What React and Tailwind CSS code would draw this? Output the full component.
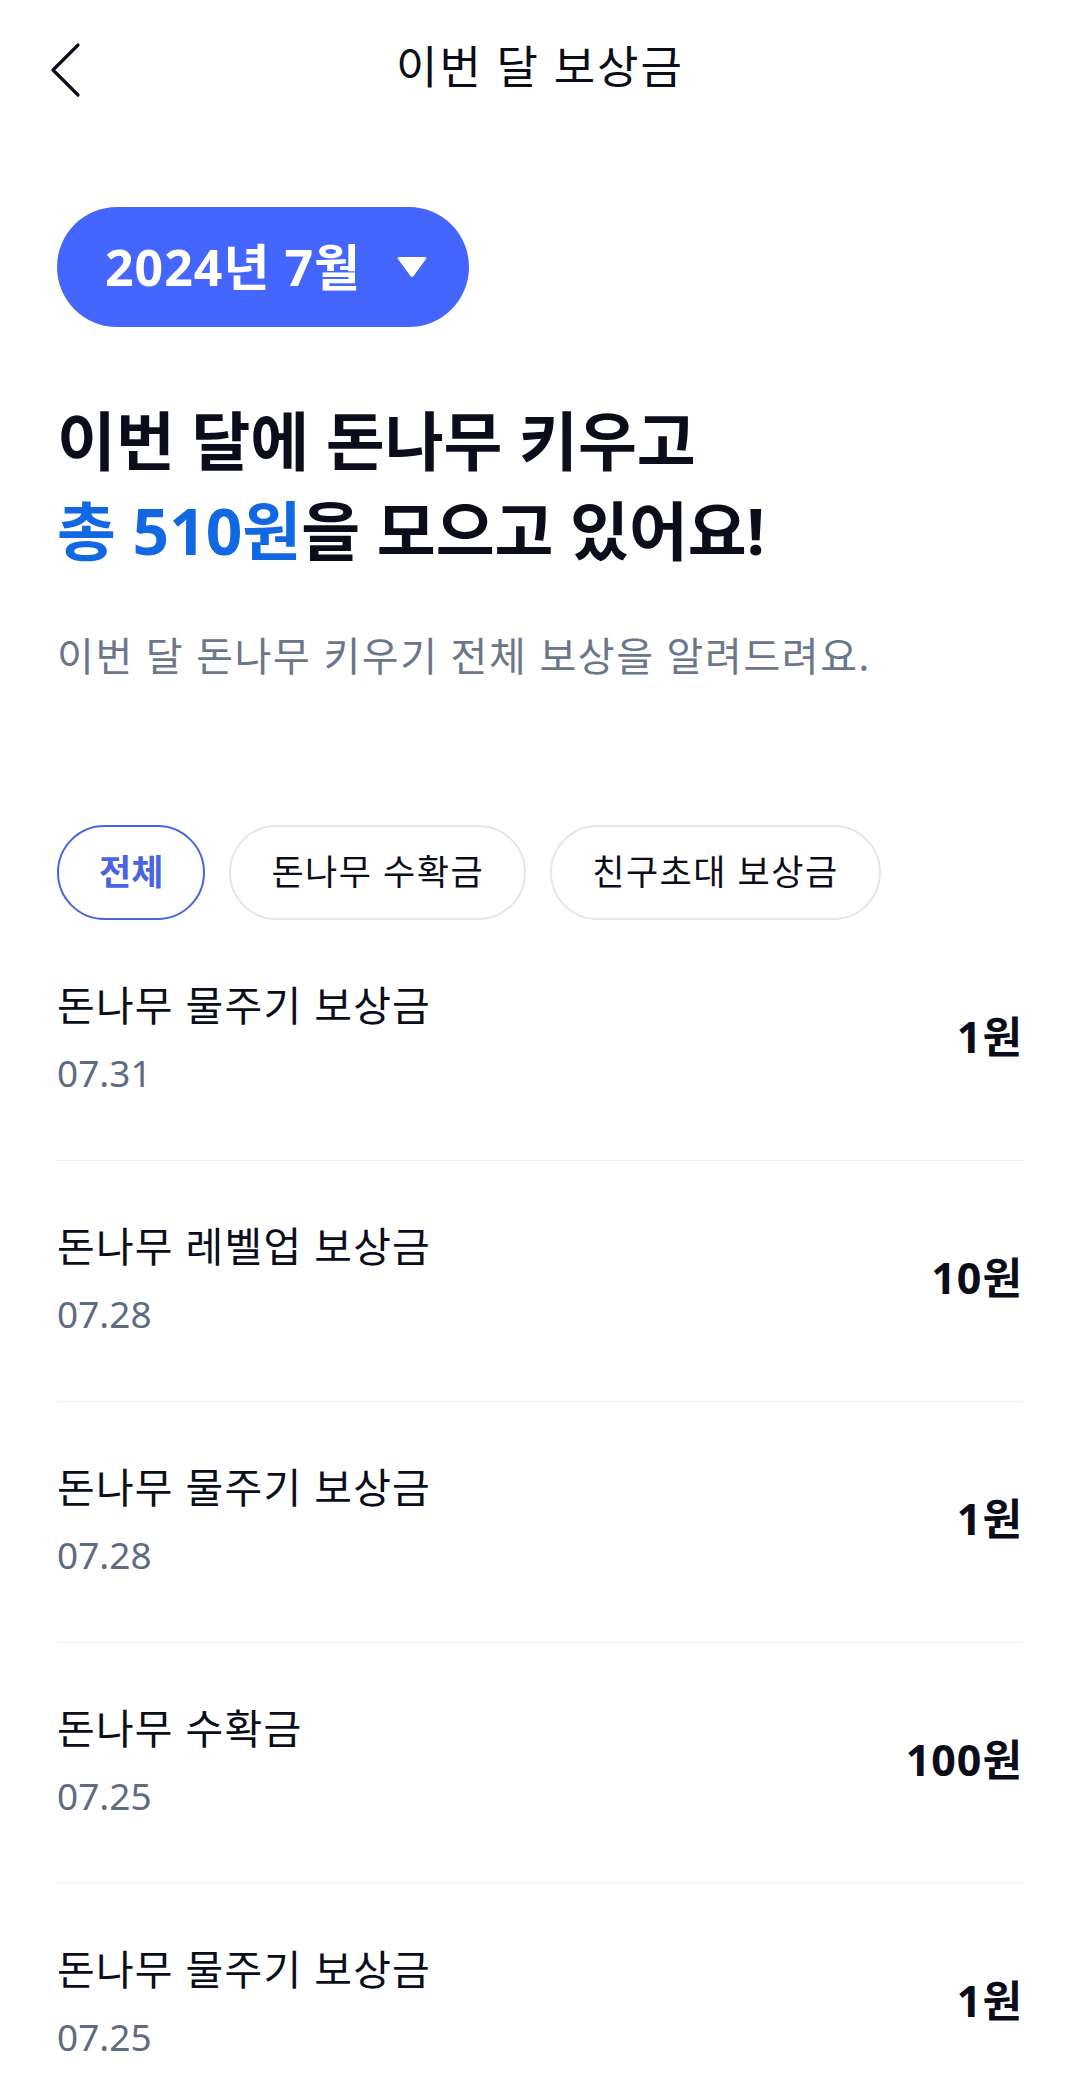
import { useState } from "react";

const rewards = [
  { id: 1, title: "돈나무 물주기 보상금", date: "07.31", amount: "1원" },
  { id: 2, title: "돈나무 레벨업 보상금", date: "07.28", amount: "10원" },
  { id: 3, title: "돈나무 물주기 보상금", date: "07.28", amount: "1원" },
  { id: 4, title: "돈나무 수확금", date: "07.25", amount: "100원" },
  { id: 5, title: "돈나무 물주기 보상금", date: "07.25", amount: "1원" },
];

const tabs = ["전체", "돈나무 수확금", "친구초대 보상금"];

export default function App() {
  const [tab, setTab] = useState(0);

  return (
    <div
      className="w-[1080px] min-h-[2097px] bg-white text-[#0b0e1a]"
      style={{ fontFamily: '"Noto Sans", "Noto Sans CJK KR", sans-serif' }}
    >
      {/* header */}
      <div className="relative h-[134px] flex items-center justify-center">
        <button className="absolute left-[44px] top-[38px] w-[44px] h-[64px] flex items-center justify-center">
          <svg width="34" height="56" viewBox="0 0 34 56" fill="none">
            <polyline points="29,3 4,28 29,53" stroke="#0b0e1a" strokeWidth="3.2" strokeLinecap="round" strokeLinejoin="round" />
          </svg>
        </button>
        <h1 className="text-[45px] leading-[56px] tracking-[2px]">이번 달 보상금</h1>
      </div>

      <div className="px-[57px]">
        {/* month picker */}
        <button className="mt-[73px] h-[120px] pl-[48px] pr-[42px] rounded-full bg-[#4466ff] flex items-center gap-[36px]">
          <span className="text-white text-[50px] font-bold tracking-[1px]">2024년 7월</span>
          <svg width="30" height="22" viewBox="0 0 30 22">
            <path d="M2 1 H28 Q30 1 29 3 L16.5 20 Q15 22 13.5 20 L1 3 Q0 1 2 1 Z" fill="white" />
          </svg>
        </button>

        {/* headline */}
        <h2 className="mt-[69px] text-[64px] leading-[90px] font-bold">
          이번 달에 돈나무 키우고
          <br />
          <span className="text-[#1268e3]">총 510원</span>을 모으고 있어요!
        </h2>
        <p className="mt-[52px] text-[40px] leading-[56px] text-[#6b768a] tracking-[1.6px]">
          이번 달 돈나무 키우기 전체 보상을 알려드려요.
        </p>

        {/* filter tabs */}
        <div className="mt-[141px] flex gap-[24px]">
          {tabs.map((t, i) => (
            <button
              key={t}
              onClick={() => setTab(i)}
              className={
                i === tab
                  ? "h-[95px] px-[40px] rounded-full border-2 border-[#4a63e0] text-[#4a63e0] font-bold text-[35px] tracking-[0px]"
                  : "h-[95px] px-[40px] rounded-full border-2 border-[#e3e6ec] text-[#0b0e1a] text-[35px] tracking-[1.5px]"
              }
            >
              {t}
            </button>
          ))}
        </div>

        {/* reward list */}
        <div>
          {rewards.map((r) => (
            <div key={r.id} className="pt-[59px] pb-[65px] border-b border-[#eceef2] flex items-center justify-between">
              <div>
                <p className="text-[41px] leading-[52px] tracking-[1.2px]">{r.title}</p>
                <p className="mt-[20px] text-[37px] leading-[44px] text-[#5f6b80]">{r.date}</p>
              </div>
              <p className="text-[43px] font-bold tracking-[1px]">{r.amount}</p>
            </div>
          ))}
        </div>
      </div>
    </div>
  );
}
